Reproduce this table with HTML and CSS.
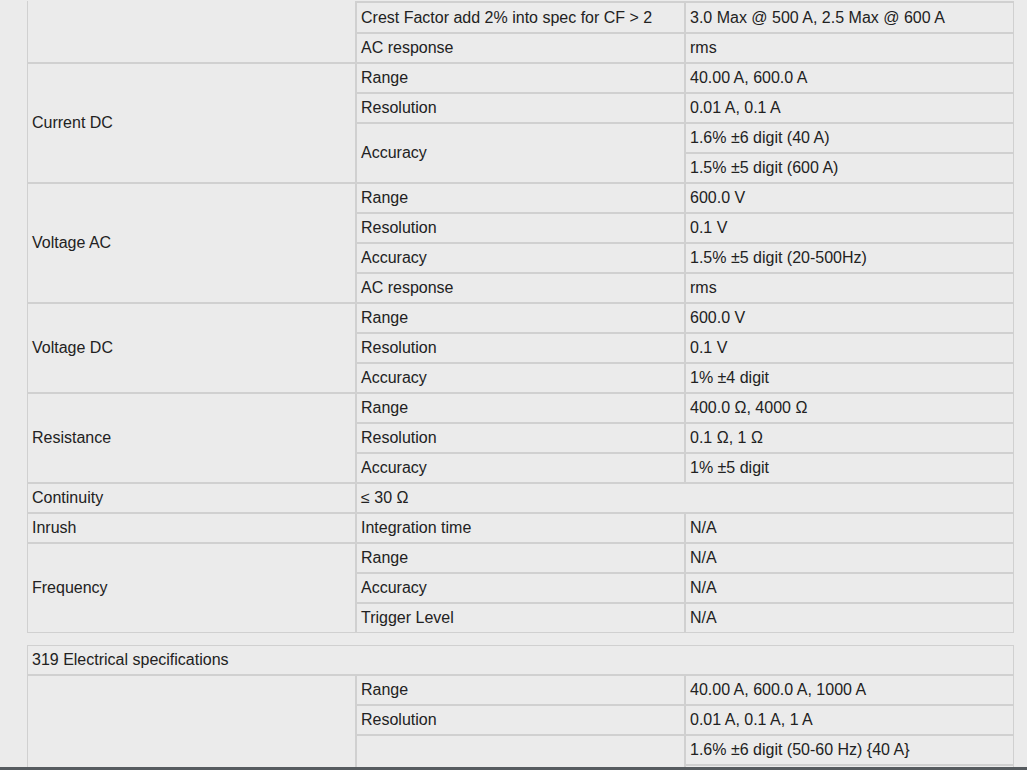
FILE: index.html
```html
<!DOCTYPE html>
<html lang="en">
<head>
<meta charset="utf-8">
<title>Electrical specifications</title>
<link rel="stylesheet" href="styles.css">
</head>
<body>
<main class="page">
  <table class="spec">
    <colgroup><col class="col"><col class="col"><col class="col"></colgroup>
    <tbody>
      <tr class="first">
        <td class="cont-label" rowspan="2"></td>
        <td class="cont">Crest Factor add 2% into spec for CF &gt; 2</td>
        <td class="cont">3.0 Max @ 500 A, 2.5 Max @ 600 A</td>
      </tr>
      <tr><td>AC response</td><td>rms</td></tr>

      <tr><td rowspan="4">Current DC</td><td>Range</td><td>40.00 A, 600.0 A</td></tr>
      <tr><td>Resolution</td><td>0.01 A, 0.1 A</td></tr>
      <tr><td rowspan="2">Accuracy</td><td>1.6% ±6 digit (40 A)</td></tr>
      <tr><td>1.5% ±5 digit (600 A)</td></tr>

      <tr><td rowspan="4">Voltage AC</td><td>Range</td><td>600.0 V</td></tr>
      <tr><td>Resolution</td><td>0.1 V</td></tr>
      <tr><td>Accuracy</td><td>1.5% ±5 digit (20-500Hz)</td></tr>
      <tr><td>AC response</td><td>rms</td></tr>

      <tr><td rowspan="3">Voltage DC</td><td>Range</td><td>600.0 V</td></tr>
      <tr><td>Resolution</td><td>0.1 V</td></tr>
      <tr><td>Accuracy</td><td>1% ±4 digit</td></tr>

      <tr><td rowspan="3">Resistance</td><td>Range</td><td>400.0 Ω, 4000 Ω</td></tr>
      <tr><td>Resolution</td><td>0.1 Ω, 1 Ω</td></tr>
      <tr><td>Accuracy</td><td>1% ±5 digit</td></tr>

      <tr><td>Continuity</td><td colspan="2">≤ 30 Ω</td></tr>

      <tr><td>Inrush</td><td>Integration time</td><td>N/A</td></tr>

      <tr><td rowspan="3">Frequency</td><td>Range</td><td>N/A</td></tr>
      <tr><td>Accuracy</td><td>N/A</td></tr>
      <tr><td>Trigger Level</td><td>N/A</td></tr>
    </tbody>
  </table>

  <table class="spec spec-next">
    <colgroup><col class="col"><col class="col"><col class="col"></colgroup>
    <tbody>
      <tr><td colspan="3">319 Electrical specifications</td></tr>
      <tr><td rowspan="4"></td><td>Range</td><td>40.00 A, 600.0 A, 1000 A</td></tr>
      <tr><td>Resolution</td><td>0.01 A, 0.1 A, 1 A</td></tr>
      <tr><td rowspan="2"></td><td>1.6% ±6 digit (50-60 Hz) {40 A}</td></tr>
      <tr><td></td></tr>
    </tbody>
  </table>
</main>
<div class="bottom-bar"></div>
</body>
</html>
```

FILE: styles.css
```css
html, body {
  margin: 0;
  padding: 0;
  height: 100%;
  overflow: hidden;
  background: #ebebeb;
}

body {
  font-family: "Liberation Sans", Arial, sans-serif;
  font-size: 16px;
  color: #222222;
}

.page {
  padding: 1px 0 0 27px;
}

.spec {
  width: 987px;
  table-layout: fixed;
  border-collapse: separate;
  border-spacing: 0;
  background: #ebebeb;
}

.spec .col {
  width: 329px;
}

.spec td {
  border: 1px solid #d0d0d0;
  padding: 5px 4px;
  height: 18px;
  line-height: 18px;
  vertical-align: middle;
  text-align: left;
  white-space: nowrap;
  overflow: hidden;
}

.spec td.cont {
  border-top-width: 2px;
  padding-top: 6px;
}

.spec td.cont-label {
  border-top: 0;
}

.spec-next {
  margin-top: 12px;
}

.bottom-bar {
  position: fixed;
  left: 0;
  right: 0;
  bottom: 0;
  height: 3px;
  background: #565b5f;
}
```
